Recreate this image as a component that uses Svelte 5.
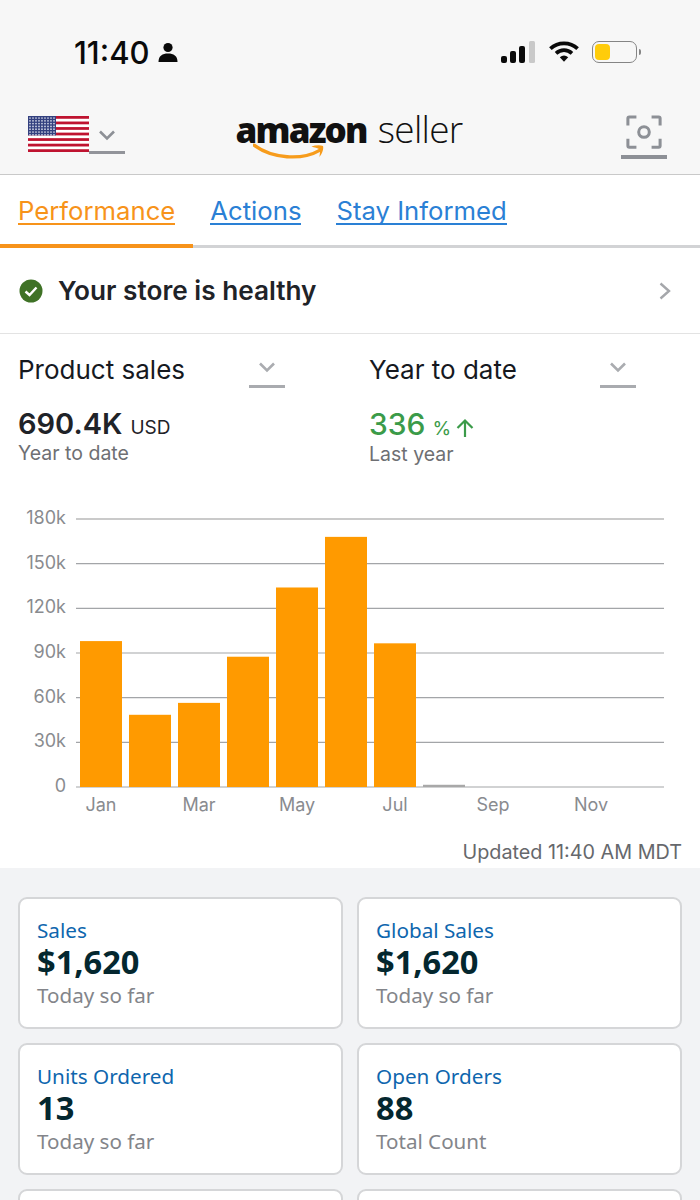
<script>
  const tabs = [
    { label: 'Performance', active: true },
    { label: 'Actions' },
    { label: 'Stay Informed' }
  ]

  const cards = [
    { title: 'Sales', value: '$1,620', note: 'Today so far' },
    { title: 'Global Sales', value: '$1,620', note: 'Today so far' },
    { title: 'Units Ordered', value: '13', note: 'Today so far' },
    { title: 'Open Orders', value: '88', note: 'Total Count' },
    { title: '', value: '', note: '' },
    { title: '', value: '', note: '' }
  ]

  // chart geometry, y axis runs 0 to 180k
  const left = 76
  const right = 664
  const top = 19
  const bottom = 287
  const scale = (bottom - top) / 180
  const ticks = [180, 150, 120, 90, 60, 30, 0]
  const sales = [98, 48.5, 56.5, 87.5, 134, 168, 96.5, 1.5]
  const months = ['Jan', 'Mar', 'May', 'Jul', 'Sep', 'Nov']
  const y = (v) => bottom - v * scale

  const stripes = [0, 1, 2, 3, 4, 5, 6]
  const stars = []
  for (let r = 0; r < 7; r++) {
    for (let c = 0; c < 9; c++) stars.push([2 + c * 3, 2 + r * 2.8])
  }
</script>

<div class="page">
  <header class="top">
    <div class="status">
      <div class="clock">
        <span>11:40</span>
        <svg width="20" height="22" viewBox="0 0 20 22">
          <circle cx="10" cy="6.5" r="4.6" fill="#0a0a0a" />
          <path d="M0.5 21 C0.5 15 4.5 12.6 10 12.6 S19.5 15 19.5 21 Z" fill="#0a0a0a" />
        </svg>
      </div>
      <div class="indicators">
        <svg width="36" height="24" viewBox="0 0 36 24">
          <rect x="1" y="16" width="6" height="7" rx="2" fill="#0a0a0a" />
          <rect x="10" y="11" width="6" height="12" rx="2" fill="#0a0a0a" />
          <rect x="19" y="6" width="6" height="17" rx="2" fill="#0a0a0a" />
          <rect x="29" y="1" width="6" height="22" rx="1.5" fill="#c9c9c9" />
        </svg>
        <svg width="30" height="24" viewBox="0 0 32 24">
          <path d="M1.5 8.5 C9.5 1 22.5 1 30.5 8.5" fill="none" stroke="#0a0a0a" stroke-width="4" />
          <path d="M7.5 13.5 C12.5 9 19.5 9 24.5 13.5" fill="none" stroke="#0a0a0a" stroke-width="4" />
          <path d="M11.5 17.5 L16 22.5 L20.5 17.5 C17.5 15.2 14.5 15.2 11.5 17.5 Z" fill="#0a0a0a" />
        </svg>
        <div class="battery">
          <div class="cell"><span></span></div>
          <i></i>
        </div>
      </div>
    </div>

    <div class="navbar">
      <div class="locale">
        <svg class="flag" width="61" height="36" viewBox="0 0 61 36">
          <rect width="61" height="36" fill="#fff" />
          {#each stripes as s}
            <rect y={s * 5.54} width="61" height="2.77" fill="#bf1330" />
          {/each}
          <rect width="28" height="19.4" fill="#33407f" />
          {#each stars as [cx, cy]}
            <circle {cx} {cy} r="0.85" fill="#d9dcea" />
          {/each}
        </svg>
        <div class="select wide">
          <svg width="18" height="11" viewBox="0 0 18 11"><path d="M2 1.5 L9 8.5 L16 1.5" fill="none" stroke="#8d9096" stroke-width="2.6" /></svg>
        </div>
      </div>

      <div class="logo">
        <div class="word">
          <b>amazon</b>
          <span>seller</span>
        </div>
        <svg class="smile" width="72" height="19" viewBox="0 0 74 19">
          <path d="M1 2 C20 16 50 18 69 7" fill="none" stroke="#f79c1c" stroke-width="3.4" stroke-linecap="round" />
          <path d="M60 3.4 C64 2 69 1.8 72 2.8 C72.8 6 71 11 68.2 14 C69 10.5 69 8 68.6 6.3 C66.5 5 63 4.4 60 3.4 Z" fill="#f79c1c" />
        </svg>
      </div>

      <div class="scan">
        <svg width="36" height="36" viewBox="0 0 38 38">
          <path d="M2 11 V3.5 A1.5 1.5 0 0 1 3.5 2 H11 M27 2 H34.5 A1.5 1.5 0 0 1 36 3.5 V11 M36 25 V32.5 A1.5 1.5 0 0 1 34.5 34 H27 M11 34 H3.5 A1.5 1.5 0 0 1 2 32.5 V25" fill="none" stroke="#8d9096" stroke-width="3.2" />
          <circle cx="19" cy="18" r="5.6" fill="none" stroke="#8d9096" stroke-width="3.2" />
        </svg>
      </div>
    </div>
  </header>

  <nav class="tabs">
    {#each tabs as tab}
      <div class="tab" class:active={tab.active}><span>{tab.label}</span></div>
    {/each}
    <div class="rest"></div>
  </nav>

  <div class="health">
    <svg width="24" height="24" viewBox="0 0 24 24">
      <circle cx="12" cy="12" r="11.5" fill="#3f7226" />
      <path d="M6.5 12.5 L10.5 16 L17.5 8.5" fill="none" stroke="#fff" stroke-width="2.4" />
    </svg>
    <strong>Your store is healthy</strong>
    <svg class="chev" width="14" height="20" viewBox="0 0 14 20"><path d="M2.5 2.5 L11 10 L2.5 17.5" fill="none" stroke="#a5a7ab" stroke-width="2.4" /></svg>
  </div>

  <section class="summary">
    <div class="metric">
      <div class="pick">
        <span>Product sales</span>
        <div class="select">
          <svg width="18" height="11" viewBox="0 0 18 11"><path d="M2 1.5 L9 8.5 L16 1.5" fill="none" stroke="#aaacb0" stroke-width="2.6" /></svg>
        </div>
      </div>
      <div class="big"><b>690.4K</b> <small>USD</small></div>
      <div class="sub">Year to date</div>
    </div>
    <div class="metric">
      <div class="pick">
        <span>Year to date</span>
        <div class="select">
          <svg width="18" height="11" viewBox="0 0 18 11"><path d="M2 1.5 L9 8.5 L16 1.5" fill="none" stroke="#aaacb0" stroke-width="2.6" /></svg>
        </div>
      </div>
      <div class="big up">
        <b>336</b> <small>%</small>
        <svg width="20" height="20" viewBox="0 0 20 20"><path d="M10 19 V2.5 M2.5 10 L10 2.5 L17.5 10" fill="none" stroke="#3b9b49" stroke-width="2.2" /></svg>
      </div>
      <div class="sub">Last year</div>
    </div>
  </section>

  <svg class="chart" width="700" height="330" viewBox="0 0 700 330">
    {#each ticks as t}
      <line x1={left} x2={right} y1={y(t)} y2={y(t)} stroke={t === 180 ? '#b9b9b9' : '#a3a5a8'} stroke-width={t === 180 ? 1.6 : 1.2} />
      <text x="66" y={y(t) + 5} text-anchor="end">{t === 0 ? '0' : t + 'k'}</text>
    {/each}
    {#each sales as v, i}
      <rect x={80 + i * 49} y={y(v)} width="42" height={v * scale} fill={i === 7 ? '#a8a8a8' : '#ff9a00'} />
    {/each}
    {#each months as m, i}
      <text x={101 + i * 98} y="311" text-anchor="middle">{m}</text>
    {/each}
  </svg>

  <div class="updated">Updated 11:40 AM MDT</div>

  <section class="cards">
    {#each cards as card}
      <div class="card">
        <div class="title">{card.title}</div>
        <div class="value">{card.value}</div>
        <div class="note">{card.note}</div>
      </div>
    {/each}
  </section>
</div>

<style>
  :global(body) {
    margin: 0;
    background: #fff;
  }

  .page {
    width: 700px;
    height: 1200px;
    overflow: hidden;
    font-family: Inter, "Liberation Sans", sans-serif;
    color: #16191f;
  }

  .top {
    height: 174px;
    background: #f7f7f7;
    border-bottom: 1px solid #c9c9c9;
  }

  .status {
    display: flex;
    justify-content: space-between;
    padding: 36px 59px 0 74px;
    height: 32px;
  }

  .clock {
    display: flex;
    align-items: center;
    gap: 8px;
    font-size: 31px;
    font-weight: 500;
    color: #0a0a0a;
  }

  .indicators {
    display: flex;
    align-items: center;
    gap: 13px;
  }

  .battery {
    display: flex;
    align-items: center;
    gap: 2px;
  }

  .cell {
    border: 1.5px solid #858585;
    border-radius: 7px;
    padding: 2px;
    box-sizing: border-box;
    width: 45px;
    height: 22px;
  }

  .cell span {
    display: block;
    width: 15px;
    height: 100%;
    background: #ffcc0a;
    border-radius: 4px;
  }

  .battery i {
    width: 2px;
    height: 6px;
    background: #858585;
    border-radius: 0 2px 2px 0;
  }

  .navbar {
    display: flex;
    justify-content: space-between;
    align-items: flex-start;
    padding: 48px 33px 0 28px;
    position: relative;
  }

  .locale {
    display: flex;
    align-items: flex-end;
  }

  .flag {
    display: block;
  }

  .select {
    width: 36px;
    height: 28px;
    border-bottom: 3px solid #a9abaf;
    display: flex;
    justify-content: center;
    align-items: flex-start;
    padding-top: 3px;
    box-sizing: border-box;
  }

  .select.wide {
    border-bottom-color: #92949a;
    margin-bottom: -2px;
    height: 28px;
    padding-top: 4px;
  }

  .logo {
    margin: -8px 0 0 -48px;
    position: relative;
  }

  .word {
    display: flex;
    align-items: baseline;
    gap: 11px;
    color: #111;
    font-family: "Open Sans", sans-serif;
    white-space: nowrap;
    line-height: 42px;
  }

  .word b {
    font-size: 35px;
    font-weight: 800;
    letter-spacing: -1.8px;
  }

  .word span {
    font-size: 37px;
    font-weight: 300;
    letter-spacing: -0.7px;
  }

  .smile {
    position: absolute;
    left: 18px;
    top: 35px;
  }

  .scan {
    height: 40px;
    width: 46px;
    border-bottom: 4px solid #8d9096;
    display: flex;
    justify-content: center;
    margin-top: -1px;
  }

  .tabs {
    display: flex;
    height: 73px;
  }

  .tab {
    padding: 21px 18px 0 17px;
    box-sizing: border-box;
    height: 73px;
    font-size: 25.7px;
    line-height: 30px;
    color: #2a80d5;
    border-bottom: 3px solid #d2d3d5;
  }

  .tab span {
    border-bottom: 2px solid currentColor;
    display: inline-block;
    line-height: 30px;
    height: 27px;
  }

  .tab.active {
    color: #f7931a;
    border-bottom: 4px solid #f7931a;
    padding-left: 18px;
  }

  .rest {
    flex: 1;
    border-bottom: 3px solid #d2d3d5;
  }

  .health {
    display: flex;
    align-items: center;
    padding: 0 28px 0 19px;
    border-bottom: 1px solid #e3e3e3;
    gap: 15px;
    box-sizing: border-box;
    height: 86px;
  }

  .health strong {
    flex: 1;
    font-size: 26.2px;
    font-weight: 600;
    color: #1f2328;
  }

  .summary {
    display: grid;
    grid-template-columns: 351px 1fr;
    height: 166px;
    padding-left: 18px;
  }

  .metric {
    padding-top: 18px;
  }

  .pick {
    display: flex;
    align-items: flex-start;
    justify-content: space-between;
    width: 267px;
    font-size: 26px;
    line-height: 36px;
    color: #16191f;
  }

  .pick .select {
    height: 36px;
    padding-top: 10px;
  }

  .big {
    display: flex;
    align-items: baseline;
    margin-top: 18px;
    line-height: 36px;
    gap: 8px;
    color: #1f2328;
  }

  .big b {
    font-size: 29px;
    font-weight: 600;
  }

  .big small {
    font-size: 19px;
  }

  .up {
    color: #3b9b49;
    gap: 7px;
  }

  .up b {
    font-size: 30px;
    font-weight: 500;
  }

  .up svg {
    align-self: center;
    margin-left: -3px;
    margin-top: 2px;
  }

  .sub {
    font-size: 19.5px;
    line-height: 24px;
    color: #6e6f73;
    margin-top: -5px;
  }

  .chart {
    display: block;
  }

  .chart text {
    font-family: Inter, sans-serif;
    font-size: 18px;
    fill: #898b8f;
  }

  .updated {
    text-align: right;
    padding-right: 18px;
    font-size: 19.8px;
    line-height: 24px;
    color: #66686c;
    height: 28px;
    margin-top: 10px;
  }

  .cards {
    background: #f2f3f5;
    display: grid;
    grid-template-columns: 325px 325px;
    grid-auto-rows: 132px;
    column-gap: 14px;
    row-gap: 14px;
    padding: 29px 18px 0;
    font-family: "Noto Sans", sans-serif;
    height: 400px;
  }

  .card {
    background: #fff;
    border: 2px solid #d5d6d8;
    border-radius: 9px;
    box-sizing: border-box;
    padding: 16px 17px 0;
  }

  .title {
    font-size: 20.7px;
    line-height: 30px;
    color: #0e66ae;
  }

  .value {
    font-size: 32.6px;
    font-weight: 700;
    line-height: 34px;
    color: #04272f;
  }

  .note {
    font-size: 20.6px;
    line-height: 33px;
    color: #83858a;
  }
</style>
